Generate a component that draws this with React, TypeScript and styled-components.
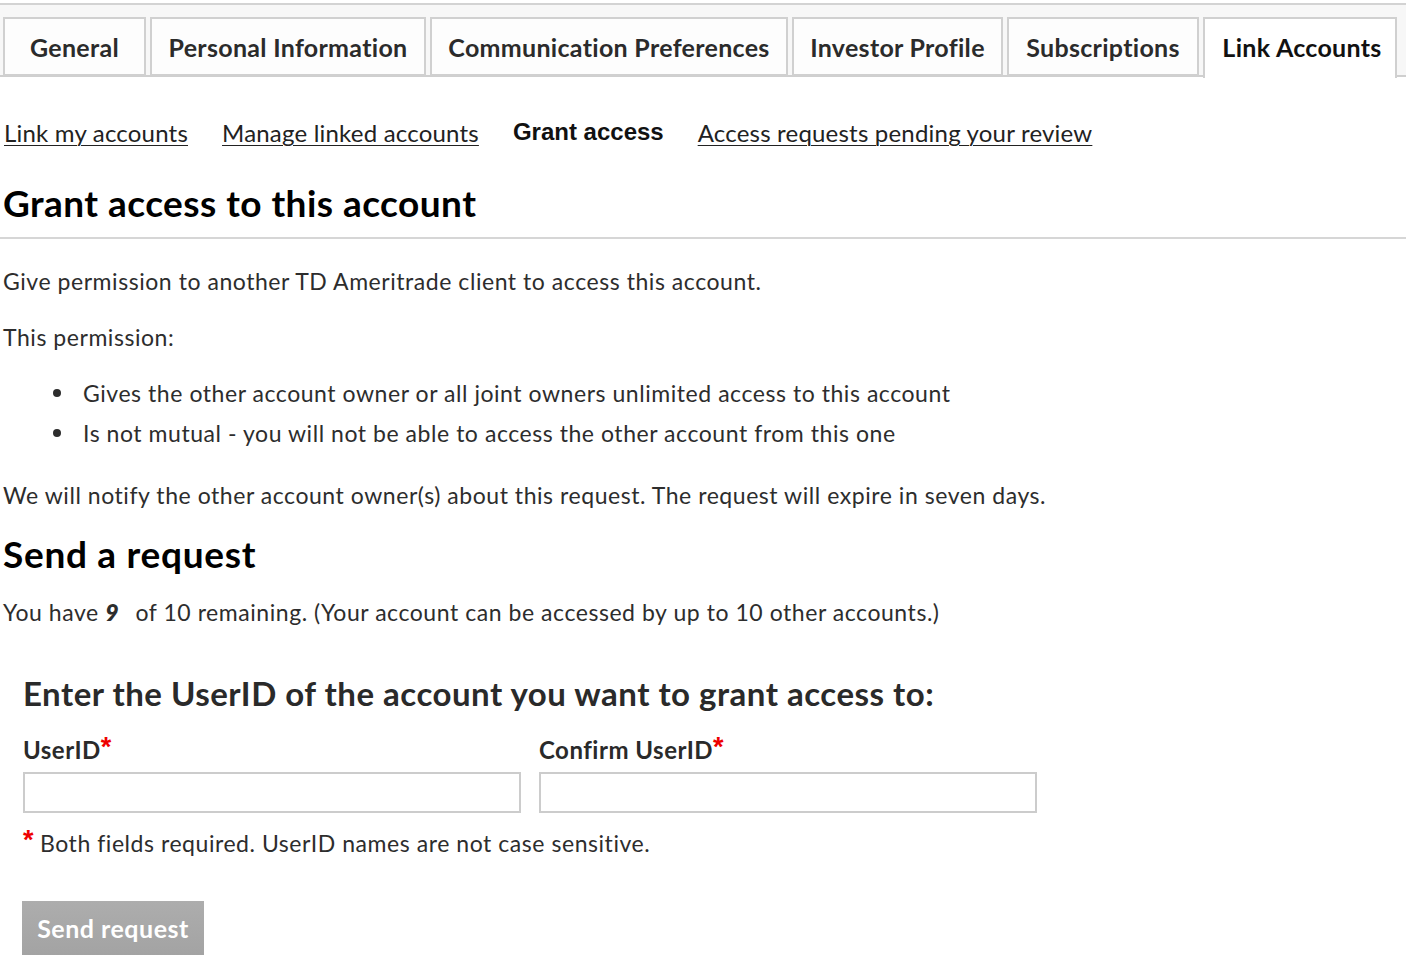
import React from "react";
import styled, { createGlobalStyle } from "styled-components";

const Global = createGlobalStyle`
  html, body { margin: 0; padding: 0; background: #fff; }
  body { font-family: Lato, "Open Sans", sans-serif; color: #333; }
  * { box-sizing: border-box; }
`;

const Page = styled.div`
  width: 1406px;
  padding-top: 3px;
`;

const TabBar = styled.div`
  display: flex;
  gap: 4px;
  border-top: 2px solid #d3d3d3;
  border-bottom: 2px solid #cfcfcf;
  background: #f7f7f7;
  padding: 12px 0 0 3px;
  height: 74px;
`;

const Tab = styled.div<{ $w: number; $active?: boolean }>`
  width: ${(p) => p.$w}px;
  height: ${(p) => (p.$active ? 61 : 59)}px;
  border: 2px solid #d0d0d0;
  border-bottom: ${(p) => (p.$active ? "none" : "2px solid #d0d0d0")};
  background: ${(p) => (p.$active ? "#fff" : "#fdfdfd")};
  display: flex;
  align-items: center;
  justify-content: center;
  padding-bottom: ${(p) => (p.$active ? 3 : 0)}px;
  padding-left: ${(p) => (p.$active ? 4 : 0)}px;
  font-family: Lato, sans-serif;
  font-weight: 700;
  font-size: 25px;
  letter-spacing: 0.3px;
  color: ${(p) => (p.$active ? "#111" : "#2b2b2b")};
`;

const Content = styled.div`
  padding: 0 0 0 3px;
`;

const SubNav = styled.nav`
  display: flex;
  align-items: baseline;
  gap: 34px;
  padding: 41px 0 0 1px;
  height: 104px;
`;

const SubLink = styled.a`
  font-family: Lato, sans-serif;
  font-size: 24px;
  letter-spacing: 0.2px;
  color: #222;
  text-decoration: underline;
  text-underline-offset: 3px;
  text-decoration-thickness: 1px;
  line-height: 30px;
`;

const SubCurrent = styled.span`
  font-family: "Liberation Sans", Arial, sans-serif;
  font-weight: 700;
  font-size: 24px;
  color: #111;
  line-height: 30px;
  position: relative;
  top: -2px;
`;

const H1 = styled.h1`
  margin: 0 0 0 -3px;
  font-family: Lato, sans-serif;
  font-weight: 700;
  font-size: 37px;
  line-height: 44px;
  letter-spacing: 0.45px;
  color: #000;
  padding: 0 0 12px 3px;
  border-bottom: 2px solid #d6d6d6;
`;

const P = styled.p<{ $mt?: number }>`
  margin: ${(p) => p.$mt ?? 28}px 0 0;
  font-size: 23px;
  letter-spacing: 0.55px;
  line-height: 28px;
  color: #2d2d2d;
`;

const List = styled.ul`
  margin: 22px 0 0;
  padding: 0 0 0 50px;
  list-style: none;
  font-size: 23px;
  letter-spacing: 0.55px;
  line-height: 40px;
  color: #2d2d2d;
`;

const Item = styled.li`
  display: flex;
  align-items: center;
  &::before {
    content: "";
    width: 8px;
    height: 8px;
    border-radius: 50%;
    background: #2d2d2d;
    margin-right: 22px;
    flex-shrink: 0;
  }
`;

const H2 = styled.h2`
  margin: 23px 0 0;
  font-family: Lato, sans-serif;
  font-weight: 700;
  font-size: 37px;
  line-height: 44px;
  letter-spacing: 0.7px;
  color: #000;
`;

const Num = styled.b`
  font-style: italic;
  font-weight: 800;
  margin-right: 10px;
`;

const Form = styled.section`
  padding: 47px 0 0 20px;
`;

const H3 = styled.h3`
  margin: 0;
  font-family: Lato, sans-serif;
  font-weight: 700;
  font-size: 33px;
  line-height: 40px;
  letter-spacing: 0.5px;
  color: #2a2a2a;
`;

const Fields = styled.div`
  display: flex;
  gap: 18px;
  margin-top: 22px;
`;

const Field = styled.div`
  display: flex;
  flex-direction: column;
  width: 498px;
`;

const Label = styled.label`
  font-weight: 700;
  font-size: 24px;
  letter-spacing: 0.5px;
  line-height: 30px;
  color: #2a2a2a;
  margin-bottom: 7px;
`;

const Star = styled.span`
  color: #ee0000;
  font-family: "Liberation Sans", Arial, sans-serif;
  font-weight: 700;
  font-size: 27px;
  letter-spacing: 0;
  position: relative;
  top: -3px;
`;

const Input = styled.input`
  width: 498px;
  height: 41px;
  border: 2px solid #cccccc;
  background: #fff;
  outline: none;
`;

const Note = styled.p`
  margin: 16px 0 0;
  font-size: 23px;
  letter-spacing: 0.55px;
  line-height: 28px;
  color: #2d2d2d;
`;

const Button = styled.button`
  margin-top: 44px;
  margin-left: -1px;
  width: 182px;
  height: 54px;
  border: none;
  background: linear-gradient(#adadad, #a3a3a3);
  color: #fff;
  font-family: Lato, sans-serif;
  font-weight: 700;
  font-size: 25px;
  letter-spacing: 0.5px;
`;

const tabs = [
  { label: "General", w: 143 },
  { label: "Personal Information", w: 276 },
  { label: "Communication Preferences", w: 358 },
  { label: "Investor Profile", w: 211 },
  { label: "Subscriptions", w: 192 },
  { label: "Link Accounts", w: 194, active: true },
];

export default function App() {
  return (
    <Page>
      <Global />
      <TabBar>
        {tabs.map((t) => (
          <Tab key={t.label} $w={t.w} $active={t.active}>
            {t.label}
          </Tab>
        ))}
      </TabBar>
      <Content>
        <SubNav>
          <SubLink href="#">Link my accounts</SubLink>
          <SubLink href="#">Manage linked accounts</SubLink>
          <SubCurrent>Grant access</SubCurrent>
          <SubLink href="#">Access requests pending your review</SubLink>
        </SubNav>
        <H1>Grant access to this account</H1>
        <P $mt={28}>Give permission to another TD Ameritrade client to access this account.</P>
        <P>This permission:</P>
        <List>
          <Item>Gives the other account owner or all joint owners unlimited access to this account</Item>
          <Item>Is not mutual - you will not be able to access the other account from this one</Item>
        </List>
        <P $mt={28}>We will notify the other account owner(s) about this request. The request will expire in seven days.</P>
        <H2>Send a request</H2>
        <P $mt={22}>
          You have <Num>9</Num> of 10 remaining. (Your account can be accessed by up to 10 other accounts.)
        </P>
        <Form>
          <H3>Enter the UserID of the account you want to grant access to:</H3>
          <Fields>
            <Field>
              <Label>
                UserID<Star>*</Star>
              </Label>
              <Input type="text" />
            </Field>
            <Field>
              <Label>
                Confirm UserID<Star>*</Star>
              </Label>
              <Input type="text" />
            </Field>
          </Fields>
          <Note>
            <Star>*</Star> Both fields required. UserID names are not case sensitive.
          </Note>
          <Button>Send request</Button>
        </Form>
      </Content>
    </Page>
  );
}
